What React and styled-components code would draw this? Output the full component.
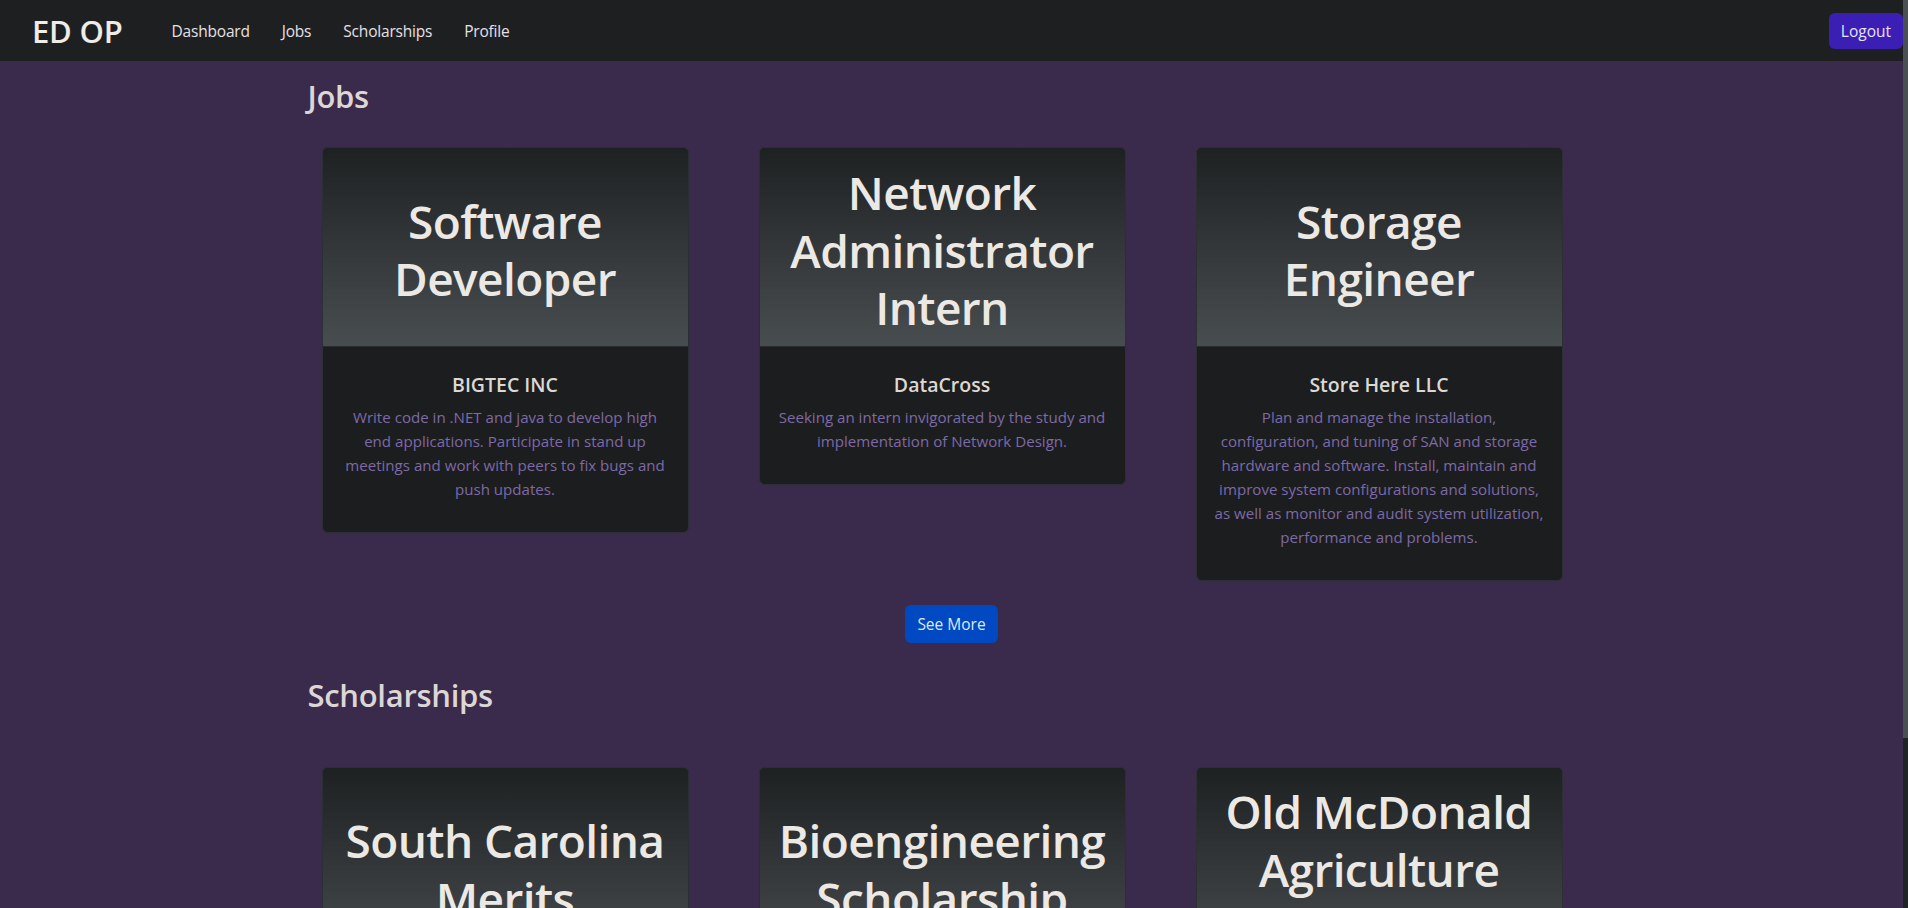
import React from "react";
import styled, { createGlobalStyle } from "styled-components";

const GlobalStyle = createGlobalStyle`
  html {
    overflow-y: scroll;
    background: linear-gradient(to bottom, #4a4f53 0, #4a4f53 738px, #212427 738px);
  }
  html::-webkit-scrollbar { width: 5px; }
  html::-webkit-scrollbar-track { background: #212427; }
  html::-webkit-scrollbar-thumb { background: #4a4f53; }
  body {
    margin: 0 5px 0 0;
    min-height: 100vh;
    background: #3a2a4c;
    font-family: "Open Sans", "Noto Sans", sans-serif;
    color: #e4e0dc;
  }
  * { box-sizing: border-box; }
`;

const NavBar = styled.nav`
  height: 61px;
  background: #1e1f21;
  display: flex;
  align-items: center;
  padding: 0 0 0 32px;
`;

const Brand = styled.a`
  font-size: 31px;
  font-weight: 600;
  color: #efebe7;
  letter-spacing: -0.2px;
  margin-right: 49px;
  text-decoration: none;
`;

const NavLinks = styled.div`
  display: flex;
  align-items: center;
  gap: 32px;
  flex: 1;
`;

const NavLink = styled.a`
  font-size: 15.5px;
  color: #e4e1e6;
  text-decoration: none;
  letter-spacing: -0.2px;
`;

const Button = styled.button`
  border: none;
  border-radius: 6px;
  font-family: inherit;
  font-size: 15.5px;
  height: ${(p) => p.$h}px;
  padding: 0 ${(p) => p.$px}px;
  background: ${(p) => p.$bg};
  color: ${(p) => p.$fg};
  cursor: pointer;
`;

const Container = styled.main`
  width: 1296px;
  margin: 0 auto;
  padding-bottom: 40px;
`;

const SectionTitle = styled.h2`
  font-size: 31px;
  font-weight: 600;
  line-height: 38.4px;
  color: #dcd7d5;
  margin: ${(p) => p.$mt}px 0 0 4px;
  letter-spacing: -0.3px;
`;

const CardRow = styled.div`
  display: flex;
  align-items: flex-start;
  gap: 70px;
  padding-left: 18px;
  margin-top: ${(p) => p.$mt}px;
`;

const Card = styled.article`
  width: 367px;
  border: 1px solid #2c2f33;
  border-radius: 6px;
  overflow: hidden;
  background: #1c1d1f;
`;

const CardHeader = styled.div`
  height: 199px;
  display: flex;
  align-items: center;
  justify-content: center;
  text-align: center;
  padding: 6px 12px 0;
  background: linear-gradient(#1e2122, #484d50);
  border-bottom: 1px solid #2a2d30;
`;

const CardTitle = styled.h3`
  margin: 0;
  font-size: 46px;
  font-weight: 600;
  line-height: 57.6px;
  color: #ece9e5;
  letter-spacing: -0.6px;
`;

const CardBody = styled.div`
  padding: 26px 16px 15px;
  text-align: center;
`;

const Company = styled.h5`
  margin: 0 0 8px;
  font-size: 19.5px;
  font-weight: 600;
  line-height: 24px;
  color: #dcd8d4;
`;

const Desc = styled.p`
  margin: 0 0 16px;
  font-size: 15.1px;
  line-height: 24px;
  color: #7d6aa7;
`;

const Center = styled.div`
  display: flex;
  justify-content: center;
  margin-top: 24px;
`;

const jobs = [
  {
    title: "Software Developer",
    company: "BIGTEC INC",
    desc: "Write code in .NET and java to develop high end applications. Participate in stand up meetings and work with peers to fix bugs and push updates.",
  },
  {
    title: "Network Administrator Intern",
    company: "DataCross",
    desc: "Seeking an intern invigorated by the study and implementation of Network Design.",
  },
  {
    title: "Storage Engineer",
    company: "Store Here LLC",
    desc: "Plan and manage the installation, configuration, and tuning of SAN and storage hardware and software. Install, maintain and improve system configurations and solutions, as well as monitor and audit system utilization, performance and problems.",
  },
];

const scholarships = [
  {
    title: "South Carolina Merits",
    company: "SC Higher Education",
    desc: "Merit-based award for South Carolina residents attending an in-state college or university.",
  },
  {
    title: "Bioengineering Scholarship",
    company: "BioTech Foundation",
    desc: "Awarded to undergraduate students pursuing a degree in bioengineering or biomedical engineering.",
  },
  {
    title: "Old McDonald Agriculture Scholarship",
    company: "McDonald Farms",
    desc: "Supporting students studying agriculture, animal science, or agribusiness.",
  },
];

function InfoCard({ item }) {
  return (
    <Card>
      <CardHeader>
        <CardTitle>{item.title}</CardTitle>
      </CardHeader>
      <CardBody>
        <Company>{item.company}</Company>
        <Desc>{item.desc}</Desc>
      </CardBody>
    </Card>
  );
}

export default function App() {
  return (
    <>
      <GlobalStyle />
      <NavBar>
        <Brand href="#">ED OP</Brand>
        <NavLinks>
          <NavLink href="#">Dashboard</NavLink>
          <NavLink href="#">Jobs</NavLink>
          <NavLink href="#">Scholarships</NavLink>
          <NavLink href="#">Profile</NavLink>
        </NavLinks>
        <Button $h={36} $px={12} $bg="#3b1fb5" $fg="#e8e2f4">
          Logout
        </Button>
      </NavBar>
      <Container>
        <SectionTitle $mt={16}>Jobs</SectionTitle>
        <CardRow $mt={32}>
          {jobs.map((j) => (
            <InfoCard key={j.title} item={j} />
          ))}
        </CardRow>
        <Center>
          <Button $h={38} $px={12} $bg="#0049c2" $fg="#dfe8f6">
            See More
          </Button>
        </Center>
        <SectionTitle $mt={33}>Scholarships</SectionTitle>
        <CardRow $mt={52}>
          {scholarships.map((s) => (
            <InfoCard key={s.title} item={s} />
          ))}
        </CardRow>
      </Container>
    </>
  );
}
